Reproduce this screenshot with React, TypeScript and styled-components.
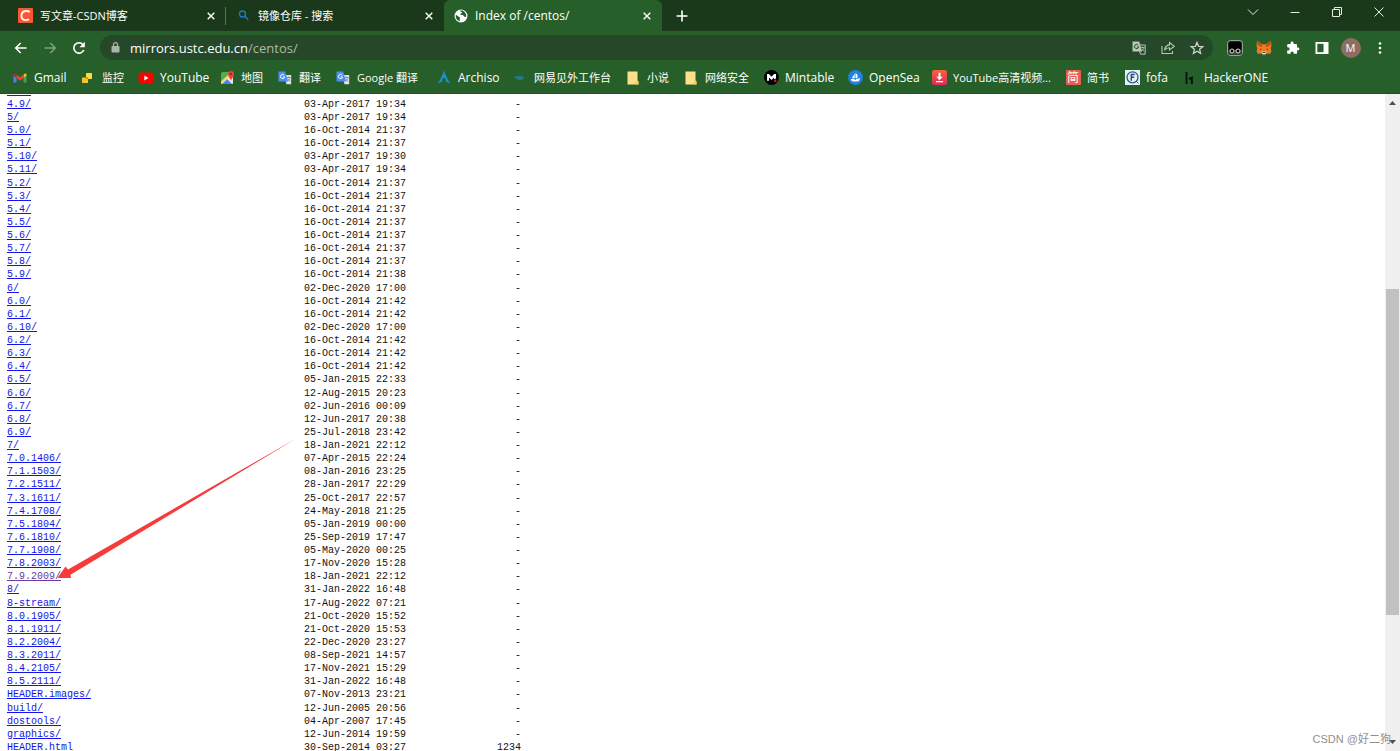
import React from "react";
import styled, { createGlobalStyle, css } from "styled-components";

const ui = `"Open Sans", "Noto Sans", "Noto Sans CJK SC", sans-serif`;

const GlobalStyle = createGlobalStyle`
  * { box-sizing: border-box; }
  body { margin: 0; background: #fff; font-family: ${ui}; }
  button { font: inherit; color: inherit; background: none; border: 0; padding: 0; margin: 0; }
  svg { display: block; flex: none; }
`;

const Window = styled.div`
  display: flex;
  flex-direction: column;
  height: 100vh;
  overflow: hidden;
  position: relative;
`;

const TabStrip = styled.header`
  display: flex;
  flex: none;
  height: 31px;
  padding-left: 8px;
  background: #1a391b;
  color: #fff;
`;

const Tab = styled.div<{ $active?: boolean; $divided?: boolean }>`
  display: flex;
  align-items: center;
  gap: 7px;
  flex: 0 1 218px;
  min-width: 0;
  padding: 0 9px 0 10px;
  position: relative;
  ${(p) =>
    p.$active &&
    css`
      background: #275f2a;
      border-radius: 6px 6px 0 0;
    `}
  ${(p) =>
    p.$divided &&
    css`
      &::after {
        content: "";
        position: absolute;
        right: 0;
        top: 7px;
        bottom: 6px;
        width: 1px;
        background: #56745a;
      }
    `}
`;

const TabTitle = styled.button<{ $cjk?: boolean }>`
  flex: 1;
  min-width: 0;
  text-align: left;
  white-space: nowrap;
  overflow: hidden;
  && {
    font-size: ${(p) => (p.$cjk ? 11 : 12)}px;
    line-height: 16px;
  }
`;

const IconButton = styled.button<{ $w?: number }>`
  display: flex;
  align-items: center;
  justify-content: center;
  flex: none;
  width: ${(p) => p.$w ?? 16}px;
  height: 24px;
`;

const NewTab = styled(IconButton)`
  height: 31px;
  margin-left: 4px;
`;

const WindowControls = styled.div`
  display: flex;
  margin-left: auto;
  color: #e4ece4;
`;

const ToolBar = styled.div`
  display: flex;
  align-items: center;
  flex: none;
  height: 33px;
  padding: 0 6px;
  background: #275f2a;
  color: #fff;
`;

const AddressBar = styled.form`
  display: flex;
  align-items: center;
  flex: 1;
  min-width: 0;
  height: 25px;
  margin: 0 7px;
  padding: 0 2px 0 9px;
  border-radius: 13px;
  background: #254829;
  color: #c3cfc4;
`;

const AddressField = styled.label`
  display: grid;
  flex: 1;
  min-width: 0;
  margin-left: 8px;
  font-size: 13px;
  line-height: 20px;
`;

const AddressInput = styled.input`
  grid-area: 1 / 1;
  width: 100%;
  border: 0;
  padding: 0;
  outline: 0;
  background: none;
  font: inherit;
  color: transparent;
`;

const AddressText = styled.span`
  grid-area: 1 / 1;
  pointer-events: none;
  white-space: nowrap;
  color: #a9bbab;
  b { font-weight: 400; color: #fff; }
`;

const Avatar = styled.span`
  display: flex;
  align-items: center;
  justify-content: center;
  width: 20px;
  height: 20px;
  border-radius: 50%;
  background: #8d6e63;
  font-size: 11px;
`;

const BookmarkBar = styled.nav`
  display: flex;
  align-items: center;
  flex: none;
  height: 30px;
  padding-left: 13px;
  padding-bottom: 2px;
  background: #275f2a;
  border-bottom: 1px solid #1f5223;
`;

const Bookmark = styled.a<{ $w: number; $cjk: boolean }>`
  display: flex;
  align-items: center;
  gap: 7px;
  flex: 0 0 ${(p) => p.$w}px;
  color: #fff;
  text-decoration: none;
  font-size: ${(p) => (p.$cjk ? 11 : 12)}px;
  line-height: 16px;
  white-space: nowrap;
`;

const BookmarkIcon = styled.span`
  display: flex;
  align-items: center;
  justify-content: center;
  flex: none;
  width: 14px;
  height: 15px;
`;

const Page = styled.main`
  display: flex;
  flex: 1;
  min-height: 0;
  background: #fff;
`;

const Listing = styled.div`
  flex: 1;
  min-width: 0;
  overflow: hidden;
  padding-left: 7px;
`;

const FileTable = styled.table`
  margin-top: -9px;
  border-collapse: collapse;
  table-layout: fixed;
  width: 514px;
  font-family: "Liberation Mono", monospace;
  font-size: 10px;
  line-height: 13px;
  color: #111;
  td { padding: 0; height: 13px; white-space: pre; }
  tr:nth-child(8n) td { height: 14px; }
`;

const NameCell = styled.td`
  width: 297px;
`;

const DateCell = styled.td`
  width: 117px;
`;

const SizeCell = styled.td`
  text-align: right;
`;

const FileLink = styled.a<{ $visited?: boolean }>`
  color: ${(p) => (p.$visited ? "#6b3a9c" : "#1414e6")};
`;

const ScrollBar = styled.div`
  display: flex;
  flex-direction: column;
  flex: none;
  width: 15px;
  background: #f0f0f0;
  padding: 1px;
`;

const ScrollArrow = styled.button`
  display: flex;
  align-items: center;
  justify-content: center;
  height: 16px;
`;

const Track = styled.div`
  display: flex;
  flex-direction: column;
  flex: 1;
`;

const TrackSpace = styled.div<{ $grow: number }>`
  flex: ${(p) => p.$grow};
`;

const Thumb = styled.div`
  flex: 325;
  background: #c1c1c1;
`;

const PointerArrow = styled.svg`
  position: absolute;
  left: 56px;
  top: 436px;
  pointer-events: none;
`;

const Watermark = styled.div`
  position: absolute;
  right: 9px;
  bottom: 4px;
  font: 11px/16px "Liberation Sans", "Noto Sans CJK SC", sans-serif;
  color: #8f8f8f;
`;

const Close = () => (
  <svg width="8" height="8" viewBox="0 0 8 8" stroke="#fff" strokeWidth="1.4"><path d="M.7.7l6.6 6.6M7.3.7L.7 7.3" /></svg>
);
const CsdnIcon = () => (
  <svg width="15" height="15" viewBox="0 0 15 15"><rect width="15" height="15" rx="1" fill="#fc5531" /><path d="M11.7 4C9.8 2.6 5.5 2.4 4 5.3 2.7 8 3.3 11.2 6.2 11.9c1.6.4 3.6.1 4.8-.6" fill="none" stroke="#fff" strokeWidth="1.9" /></svg>
);
const SearchIcon = () => (
  <svg width="15" height="15" viewBox="0 0 15 15" fill="none" stroke="#1a7dc9" strokeWidth="1.3"><circle cx="6.500" cy="6" r="3" /><path d="M8.800 8.200l3.500 3.500" /></svg>
);
const GlobeIcon = () => (
  <svg width="14" height="14" viewBox="0 0 14 14"><circle cx="7" cy="7" r="6.500" fill="#fff" /><path d="M1.800 5.800c1.700.3 1.500 1.600 3 1.900 1.300.3 1.300 1 1 1.800-.3.9.4 1.500-.3 2.700C3 11.600 1.300 9 1.800 5.800zM6 1.700c.3 1.300 2 .9 2 2 0 .8-1.600.7-1.700 1.700-.1.7 1.200.500 2.300.6 1.100.1 1 1.800 2.400 1.900.6 0 1 .2 1.200-.4.300-2.300-1-4.500-3-5.500-1-.5-2.200-.6-3.200-.3z" fill="#275f2a" /></svg>
);
const MailIcon = () => (
  <svg width="14" height="14" viewBox="0 0 14 14"><path d="M.5 3.500v8h3V6z" fill="#4285f4" /><path d="M13.500 3.500v8h-3V6z" fill="#34a853" /><path d="M10.500 3.800L12 2.600c.8-.5 1.500 0 1.500.9v1.300l-3 2.300z" fill="#fbbc04" /><path d="M3.500 3.600L7 6.300l3.500-2.700v3.500L7 9.700 3.500 7.100z" fill="#ea4335" /><path d="M3.500 3.600L2 2.500C1.200 2 .5 2.600.5 3.500v1.300l3 2.300z" fill="#c5221f" /></svg>
);
const MonitorIcon = () => (
  <svg width="14" height="14" viewBox="0 0 14 14"><rect x="5" y="2" width="6" height="6" rx=".5" fill="#ffd93d" /><rect x="1" y="6.500" width="6" height="5.500" rx=".5" fill="#f4c62c" /><path d="M5 6.500h2V8H5z" fill="#b98c12" /></svg>
);
const YouTubeIcon = () => (
  <svg width="16" height="14" viewBox="0 0 16 14"><rect x=".5" y="1.500" width="15" height="11" rx="3" fill="#f00" /><path d="M6.300 4.600v4.800L10.500 7z" fill="#fff" /></svg>
);
const MapsIcon = () => (
  <svg width="15" height="15" viewBox="0 0 15 15"><rect x="1" y="2" width="12" height="12" rx="1.500" fill="#4caf50" /><path d="M1 14L12.500 3.500l.5 1V13a1 1 0 01-1 1z" fill="#e8e8e8" /><path d="M2 14l5-5 5 5z" fill="#4285f4" /><path d="M1 11.500L10.500 2.500l1.500 1.800L2 14l-1-.6z" fill="#fdd663" /><path d="M11 11c-.2-2.600-3-3.800-3-6.900a3 3 0 016 0C14 7.200 11.200 8.400 11 11z" fill="#ea4335" /><circle cx="11" cy="4" r="1.100" fill="#8f1f18" /></svg>
);
const TranslateIcon = ({ mono = false }: { mono?: boolean }) => (
  <svg width="14" height="14" viewBox="0 0 14 14"><path d="M6 4h7.200v9.200H8.500z" fill={mono ? "none" : "#dfe3e8"} stroke={mono ? "#b9c6ba" : "none"} /><path d="M.5.5h6.700L10 10.500H.5z" fill={mono ? "#b9c6ba" : "#4b8df8"} /><path d="M6.300 4.300A2.100 2.100 0 106.600 6H4.900" fill="none" stroke={mono ? "#254829" : "#fff"} strokeWidth="1" /><path d="M8.500 6.500h4M10.500 5.500v1M12 6.500c-.3 2-1.500 3-2.500 3.600M9.300 7.500l3 3" fill="none" stroke={mono ? "#b9c6ba" : "#6f7f93"} strokeWidth=".8" /></svg>
);
const ArchIcon = () => (
  <svg width="14" height="15" viewBox="0 0 14 15"><path d="M7 .5C5.500 5 3.500 9.500.3 14c2-1.300 3.700-1.900 4.900-2.200-.3-2 .5-3.700 1.800-3.700s2.100 1.700 1.800 3.700c1.200.3 2.900.9 4.900 2.200C10.500 9.500 8.500 5 7 .5z" fill="#1793d1" /></svg>
);
const FishIcon = () => (
  <svg width="14" height="14" viewBox="0 0 14 14"><path d="M1 5c2 0 3-1 6-.8 2.500.2 4 1.300 5 2.800-1 1-2.500 2.200-5 2.200C4.500 9.200 4 7.500 1 5z" fill="#176a75" /><path d="M2 6.300h8M4 8h6" stroke="#2d95a5" strokeWidth=".7" /></svg>
);
const NoteIcon = () => (
  <svg width="14" height="14" viewBox="0 0 14 14"><path d="M1.500.5h10v9l1 1V13.500h-11z" fill="#ffe08a" /><path d="M9.500 13.500v-3h3v3z" fill="#f3c95b" /></svg>
);
const MintableIcon = () => (
  <svg width="15" height="15" viewBox="0 0 15 15"><circle cx="7.500" cy="7.500" r="7.400" fill="#000" /><path d="M3 10.800V4h1.900l2.600 2.800L10.100 4H12v4.600l-2 .6V7.600L7.500 10 5 7.600v3.200z" fill="#fff" /><circle cx="11.300" cy="10.700" r="1.200" fill="#e5173f" /></svg>
);
const OpenSeaIcon = () => (
  <svg width="15" height="15" viewBox="0 0 15 15"><circle cx="7.500" cy="7.500" r="7.400" fill="#2081e2" /><path d="M6.700 3.500v4.700H3.800zM7.500 3c2 1.300 2.800 3.200 1.700 5.200H7.500zM2.800 9h3.700v.8h1.700V9l3.900-.7c0 1.500-1.300 3.200-2.700 3.200H5.500C3.800 11.500 2.900 10.300 2.800 9z" fill="#fff" /></svg>
);
const DownloadIcon = () => (
  <svg width="15" height="15" viewBox="0 0 15 15"><defs><linearGradient id="dl" x2="0" y2="1"><stop stopColor="#f5633c" /><stop offset="1" stopColor="#db2a5c" /></linearGradient></defs><rect width="15" height="15" rx="2.500" fill="url(#dl)" /><path d="M6.500 2.800h2v4h2.200L7.500 10.200 4.300 6.800h2.200zM4 11h7v1.200H4z" fill="#fff" /></svg>
);
const JianBadge = styled.span`
  display: flex;
  align-items: center;
  justify-content: center;
  flex: none;
  width: 15px;
  height: 15px;
  border-radius: 1px;
  background: #e2604d;
  font-size: 12px;
  line-height: 15px;
`;
const FofaIcon = () => (
  <svg width="15" height="15" viewBox="0 0 15 15"><rect width="15" height="15" fill="#e4f2f5" /><circle cx="7.500" cy="7.300" r="5.500" fill="none" stroke="#2a5d8f" strokeWidth="1.300" /><path d="M6.300 10.700V4.500h3.400M6.300 7.300h2.900" fill="none" stroke="#234a82" strokeWidth="1.400" /><path d="M11 11l2.500 2.500" stroke="#2a5d8f" /></svg>
);
const HackerIcon = () => (
  <svg width="14" height="14" viewBox="0 0 14 14" stroke="#041006" fill="none"><path d="M3.500 1v12" strokeWidth="1.800" /><path d="M6 8l2.800-1.300V13" strokeWidth="2" /></svg>
);
const ArrowIcon = ({ forward = false }: { forward?: boolean }) => (
  <svg width="14" height="14" viewBox="0 0 14 14" fill="none" stroke={forward ? "#7fa181" : "#fff"} strokeWidth="1.500"><path d={forward ? "M1.500 7h10.500M7.300 2l5 5-5 5" : "M12.500 7H2M6.700 2l-5 5 5 5"} /></svg>
);
const ReloadIcon = () => (
  <svg width="14" height="14" viewBox="0 0 14 14" fill="none" stroke="#fff" strokeWidth="1.600"><path d="M11.800 9A5.200 5.200 0 1111 3.600" /><path d="M12.800.8v5.400H7.500z" fill="#fff" stroke="none" /></svg>
);
const LockIcon = () => (
  <svg width="13" height="13" viewBox="0 0 13 13"><rect x="2.500" y="5" width="8" height="6.500" rx=".8" fill="#a9b6aa" /><path d="M4.500 5V3.600a2 2 0 014 0V5" fill="none" stroke="#a9b6aa" strokeWidth="1.200" /></svg>
);
const ShareIcon = () => (
  <svg width="14" height="14" viewBox="0 0 14 14" fill="none" stroke="#b9c6ba" strokeWidth="1.100"><path d="M1 5v7.500h10.500V10" /><path d="M8.500 1.500l4.800 3.800-4.800 3.600V6.700c-2.200 0-3.800.8-5 2.600.4-3 2.200-5 5-5.400z" /></svg>
);
const StarIcon = () => (
  <svg width="14" height="14" viewBox="0 0 14 14" fill="none" stroke="#c9d4ca" strokeWidth="1.300"><path d="M7 1.400l1.600 3.900 4.200.3-3.200 2.700 1 4.100L7 10.200l-3.600 2.200 1-4.100L1.200 5.600l4.200-.3z" /></svg>
);
const MonkeyIcon = () => (
  <svg width="16" height="16" viewBox="0 0 16 16"><rect x=".7" y=".7" width="14.600" height="14.600" rx="2.500" fill="#000" stroke="#aeb9af" /><path d="M1.300 9.800h13.400v3.700a1.300 1.300 0 01-1.300 1.300H2.600a1.300 1.300 0 01-1.300-1.300z" fill="#3a4a3b" /><circle cx="5" cy="11" r="2" fill="#000" stroke="#ddd" /><circle cx="11" cy="11" r="2" fill="#000" stroke="#ddd" /></svg>
);
const FoxIcon = () => (
  <svg width="16" height="15" viewBox="0 0 16 15"><path d="M1 .8l5.200 3.500h3.600L15 .8l.5 4.500-.8 3.200.7 2.700-1.500 2.800-3.200-.7L9 14.500H7l-1.700-1.200-3.200.7L.6 11.200l.7-2.700-.8-3.200z" fill="#ed7b1f" /><path d="M1 .8l5.200 3.500-.5 3L1.500 5zM15 .8L9.800 4.300l.5 3L14.500 5z" fill="#b95316" /><path d="M5.300 13.300L6 11h4l.7 2.300L9 14.500H7z" fill="#d9c8b6" /><path d="M4 8.500l2 1.300-1.900.3zM12 8.500l-2 1.300 1.900.3zM6.600 11.700h2.800v1H6.600z" fill="#25323a" /></svg>
);
const PuzzleIcon = () => (
  <svg width="14" height="14" viewBox="0 0 24 24" fill="#fff"><path d="M20.500 11H19V7a2 2 0 00-2-2h-4V3.500a2.500 2.500 0 00-5 0V5H4a2 2 0 00-2 2v3.800h1.500a2.700 2.700 0 010 5.400H2V20a2 2 0 002 2h3.800v-1.500a2.700 2.700 0 015.400 0V22H17a2 2 0 002-2v-4h1.500a2.500 2.500 0 000-5z" /></svg>
);
const PanelIcon = () => (
  <svg width="14" height="14" viewBox="0 0 14 14"><path d="M.5 1h13v12H.5z" fill="#fff" /><path d="M2.300 2.800h6.200v8.400H2.300z" fill="#275f2a" /></svg>
);
const DotsIcon = () => (
  <svg width="4" height="14" viewBox="0 0 4 14" fill="#fff"><circle cx="2" cy="2.500" r="1.300" /><circle cx="2" cy="7" r="1.300" /><circle cx="2" cy="11.500" r="1.300" /></svg>
);
const Glyph = ({ d }: { d: string }) => (
  <svg width="12" height="12" viewBox="0 0 12 12" fill="none" stroke="currentColor" strokeWidth="1"><path d={d} /></svg>
);

const bookmarks: { label: string; width: number; icon: React.ReactNode; cjk?: boolean }[] = [
  { label: "Gmail", width: 68, icon: <MailIcon /> },
  { label: "监控", width: 58, icon: <MonitorIcon />, cjk: true },
  { label: "YouTube", width: 81, icon: <YouTubeIcon /> },
  { label: "地图", width: 58, icon: <MapsIcon />, cjk: true },
  { label: "翻译", width: 58, icon: <TranslateIcon />, cjk: true },
  { label: "Google 翻译", width: 101, icon: <TranslateIcon />, cjk: true },
  { label: "Archiso", width: 76, icon: <ArchIcon /> },
  { label: "网易见外工作台", width: 113, icon: <FishIcon />, cjk: true },
  { label: "小说", width: 58, icon: <NoteIcon />, cjk: true },
  { label: "网络安全", width: 80, icon: <NoteIcon />, cjk: true },
  { label: "Mintable", width: 84, icon: <MintableIcon /> },
  { label: "OpenSea", width: 84, icon: <OpenSeaIcon /> },
  { label: "YouTube高清视频...", width: 134, icon: <DownloadIcon />, cjk: true },
  { label: "简书", width: 59, icon: <JianBadge>简</JianBadge>, cjk: true },
  { label: "fofa", width: 58, icon: <FofaIcon /> },
  { label: "HackerONE", width: 90, icon: <HackerIcon /> },
];

const files = `4.8/|11-Mar-2012 19:34
4.9/|03-Apr-2017 19:34
5/|03-Apr-2017 19:34
5.0/|16-Oct-2014 21:37
5.1/|16-Oct-2014 21:37
5.10/|03-Apr-2017 19:30
5.11/|03-Apr-2017 19:34
5.2/|16-Oct-2014 21:37
5.3/|16-Oct-2014 21:37
5.4/|16-Oct-2014 21:37
5.5/|16-Oct-2014 21:37
5.6/|16-Oct-2014 21:37
5.7/|16-Oct-2014 21:37
5.8/|16-Oct-2014 21:37
5.9/|16-Oct-2014 21:38
6/|02-Dec-2020 17:00
6.0/|16-Oct-2014 21:42
6.1/|16-Oct-2014 21:42
6.10/|02-Dec-2020 17:00
6.2/|16-Oct-2014 21:42
6.3/|16-Oct-2014 21:42
6.4/|16-Oct-2014 21:42
6.5/|05-Jan-2015 22:33
6.6/|12-Aug-2015 20:23
6.7/|02-Jun-2016 00:09
6.8/|12-Jun-2017 20:38
6.9/|25-Jul-2018 23:42
7/|18-Jan-2021 22:12
7.0.1406/|07-Apr-2015 22:24
7.1.1503/|08-Jan-2016 23:25
7.2.1511/|28-Jan-2017 22:29
7.3.1611/|25-Oct-2017 22:57
7.4.1708/|24-May-2018 21:25
7.5.1804/|05-Jan-2019 00:00
7.6.1810/|25-Sep-2019 17:47
7.7.1908/|05-May-2020 00:25
7.8.2003/|17-Nov-2020 15:28
7.9.2009/|18-Jan-2021 22:12
8/|31-Jan-2022 16:48
8-stream/|17-Aug-2022 07:21
8.0.1905/|21-Oct-2020 15:52
8.1.1911/|21-Oct-2020 15:53
8.2.2004/|22-Dec-2020 23:27
8.3.2011/|08-Sep-2021 14:57
8.4.2105/|17-Nov-2021 15:29
8.5.2111/|31-Jan-2022 16:48
HEADER.images/|07-Nov-2013 23:21
build/|12-Jun-2005 20:56
dostools/|04-Apr-2007 17:45
graphics/|12-Jun-2014 19:59
HEADER.html|30-Sep-2014 03:27|1234`
  .split("\n")
  .map((line) => line.split("|"));

export default function App() {
  return (
    <Window>
      <GlobalStyle />
      <TabStrip>
        <Tab $divided>
          <CsdnIcon />
          <TabTitle $cjk>写文章-CSDN博客</TabTitle>
          <IconButton aria-label="Close tab" $w={12}><Close /></IconButton>
        </Tab>
        <Tab>
          <SearchIcon />
          <TabTitle $cjk>镜像仓库 - 搜索</TabTitle>
          <IconButton aria-label="Close tab" $w={12}><Close /></IconButton>
        </Tab>
        <Tab $active>
          <GlobeIcon />
          <TabTitle>Index of /centos/</TabTitle>
          <IconButton aria-label="Close tab" $w={12}><Close /></IconButton>
        </Tab>
        <NewTab aria-label="New tab" $w={32}>
          <svg width="12" height="12" viewBox="0 0 12 12" stroke="#fff" strokeWidth="1.600"><path d="M6 .5v11M.5 6h11" /></svg>
        </NewTab>
        <WindowControls>
          <IconButton aria-label="Search tabs" $w={42}><Glyph d="M1 3.500l5 5 5-5" /></IconButton>
          <IconButton aria-label="Minimize" $w={42}><Glyph d="M1.500 6.500h9" /></IconButton>
          <IconButton aria-label="Restore" $w={42}><Glyph d="M1.500 3.500h7v7h-7zM3.500 3.500v-2h7v7h-2" /></IconButton>
          <IconButton aria-label="Close window" $w={42}><Glyph d="M1.500 1.500l9 9M10.500 1.500l-9 9" /></IconButton>
        </WindowControls>
      </TabStrip>
      <ToolBar>
        <IconButton aria-label="Back" $w={29}><ArrowIcon /></IconButton>
        <IconButton aria-label="Forward" $w={29}><ArrowIcon forward /></IconButton>
        <IconButton aria-label="Reload" $w={29}><ReloadIcon /></IconButton>
        <AddressBar>
          <LockIcon />
          <AddressField>
            <AddressInput aria-label="Address" />
            <AddressText><b>mirrors.ustc.edu.cn</b>/centos/</AddressText>
          </AddressField>
          <IconButton type="button" aria-label="Translate page" $w={29}><TranslateIcon mono /></IconButton>
          <IconButton type="button" aria-label="Share" $w={29}><ShareIcon /></IconButton>
          <IconButton type="button" aria-label="Bookmark this page" $w={29}><StarIcon /></IconButton>
        </AddressBar>
        <IconButton aria-label="Userscripts" $w={29}><MonkeyIcon /></IconButton>
        <IconButton aria-label="Wallet" $w={29}><FoxIcon /></IconButton>
        <IconButton aria-label="Extensions" $w={29}><PuzzleIcon /></IconButton>
        <IconButton aria-label="Side panel" $w={29}><PanelIcon /></IconButton>
        <IconButton aria-label="Profile" $w={29}><Avatar>M</Avatar></IconButton>
        <IconButton aria-label="Menu" $w={29}><DotsIcon /></IconButton>
      </ToolBar>
      <BookmarkBar>
        {bookmarks.map(({ label, width, icon, cjk = false }) => (
          <Bookmark key={label} href="#" $w={width} $cjk={cjk}>
            <BookmarkIcon>{icon}</BookmarkIcon>
            {label}
          </Bookmark>
        ))}
      </BookmarkBar>
      <Page>
        <Listing>
          <FileTable>
            <tbody>
              {files.map(([name, date, size]) => (
                <tr key={name}>
                  <NameCell><FileLink href="#" $visited={name === "7.9.2009/"}>{name}</FileLink></NameCell>
                  <DateCell>{date}</DateCell>
                  <SizeCell>{size ?? "-"}</SizeCell>
                </tr>
              ))}
            </tbody>
          </FileTable>
        </Listing>
        <ScrollBar>
          <ScrollArrow aria-label="Scroll up"><svg width="7" height="4" viewBox="0 0 7 4"><path d="M0 4l3.500-4L7 4z" fill="#505050" /></svg></ScrollArrow>
          <Track>
            <TrackSpace $grow={178} />
            <Thumb />
            <TrackSpace $grow={119} />
          </Track>
          <ScrollArrow aria-label="Scroll down"><svg width="7" height="4" viewBox="0 0 7 4"><path d="M0 0l3.500 4L7 0z" fill="#505050" /></svg></ScrollArrow>
        </ScrollBar>
      </Page>
      <PointerArrow width="242" height="144" viewBox="0 0 242 144">
        <path d="M241 2L12 133.500 9.500 130.500 1.500 142h13.500l-.5-3.300z" fill="#f63b3b" />
      </PointerArrow>
      <Watermark>CSDN @好二狗</Watermark>
    </Window>
  );
}
